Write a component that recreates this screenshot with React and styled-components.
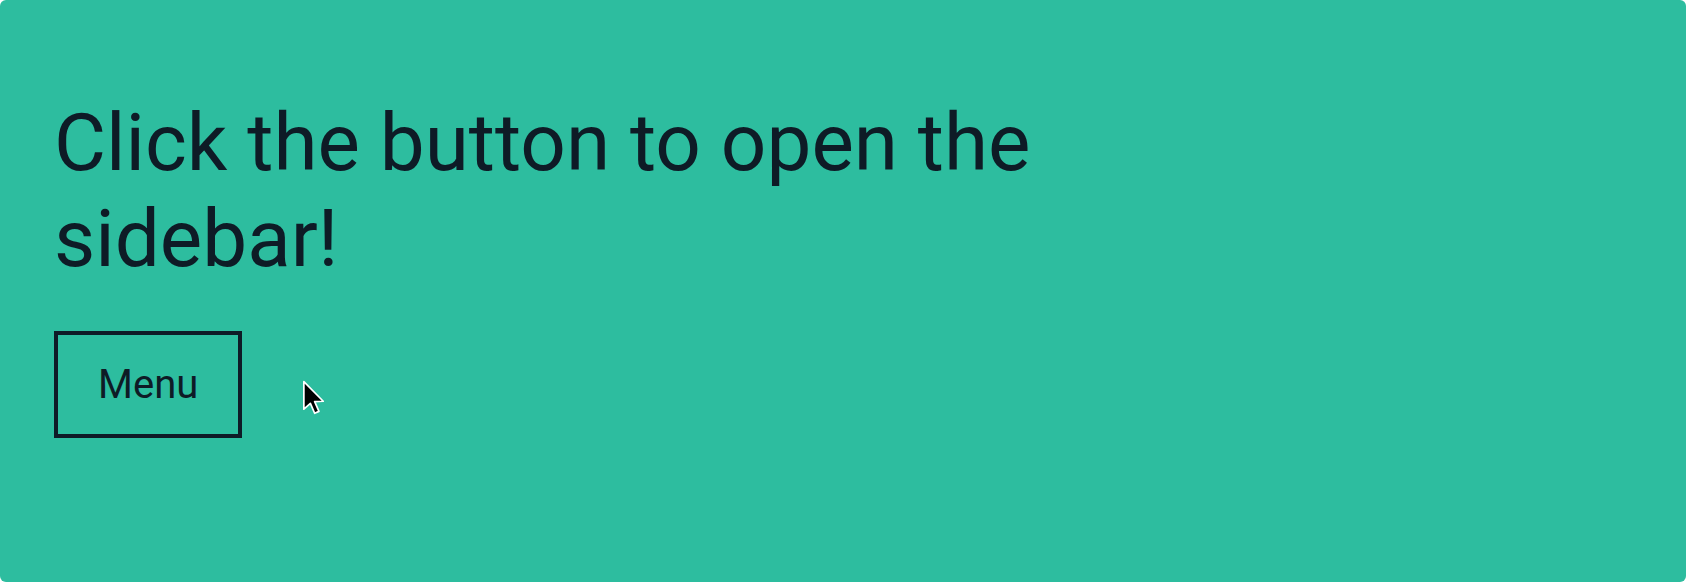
import styled, { createGlobalStyle } from "styled-components";

const GlobalStyle = createGlobalStyle`
* {
  box-sizing: border-box;
}
body {
  margin: 0;
  background: #ffffff;
  font-family: Roboto, "Noto Sans", sans-serif;
}
`;

const Page = styled.main`
position: relative;
height: 582px;
background-color: #2dbd9f;
border-radius: 6px;
padding: 95px 54px;
display: flex;
flex-direction: column;
align-items: flex-start;
gap: 44px;
color: #0e1b26;
`;

const Heading = styled.h1`
margin: 0;
max-width: 1100px;
font-size: 80px;
font-weight: 400;
line-height: 96px;
`;

const MenuButton = styled.button`
font-family: Roboto, "Noto Sans", sans-serif;
font-size: 40px;
line-height: 47px;
color: #0e1b26;
background: transparent;
border: 4px solid #0e1b26;
border-radius: 0;
padding: 26px 40px 26px;
cursor: pointer;
`;

const Pointer = styled.svg`
position: absolute;
left: 302px;
top: 380px;
pointer-events: none;
`;

const App = () => {
  return (
    <>
      <GlobalStyle />
      <Page>
        <Heading>Click the button to open the sidebar!</Heading>
        <MenuButton>Menu</MenuButton>
        <Pointer width="26" height="36" viewBox="0 0 15 21">
          <path
            d="M1 1 L1 17 L4.8 13.6 L7.3 19.4 L9.8 18.3 L7.3 12.6 L12.3 12.4 Z"
            fill="#000"
            stroke="#fff"
            strokeWidth="1"
            strokeLinejoin="round"
          />
        </Pointer>
      </Page>
    </>
  );
};

export default App;
